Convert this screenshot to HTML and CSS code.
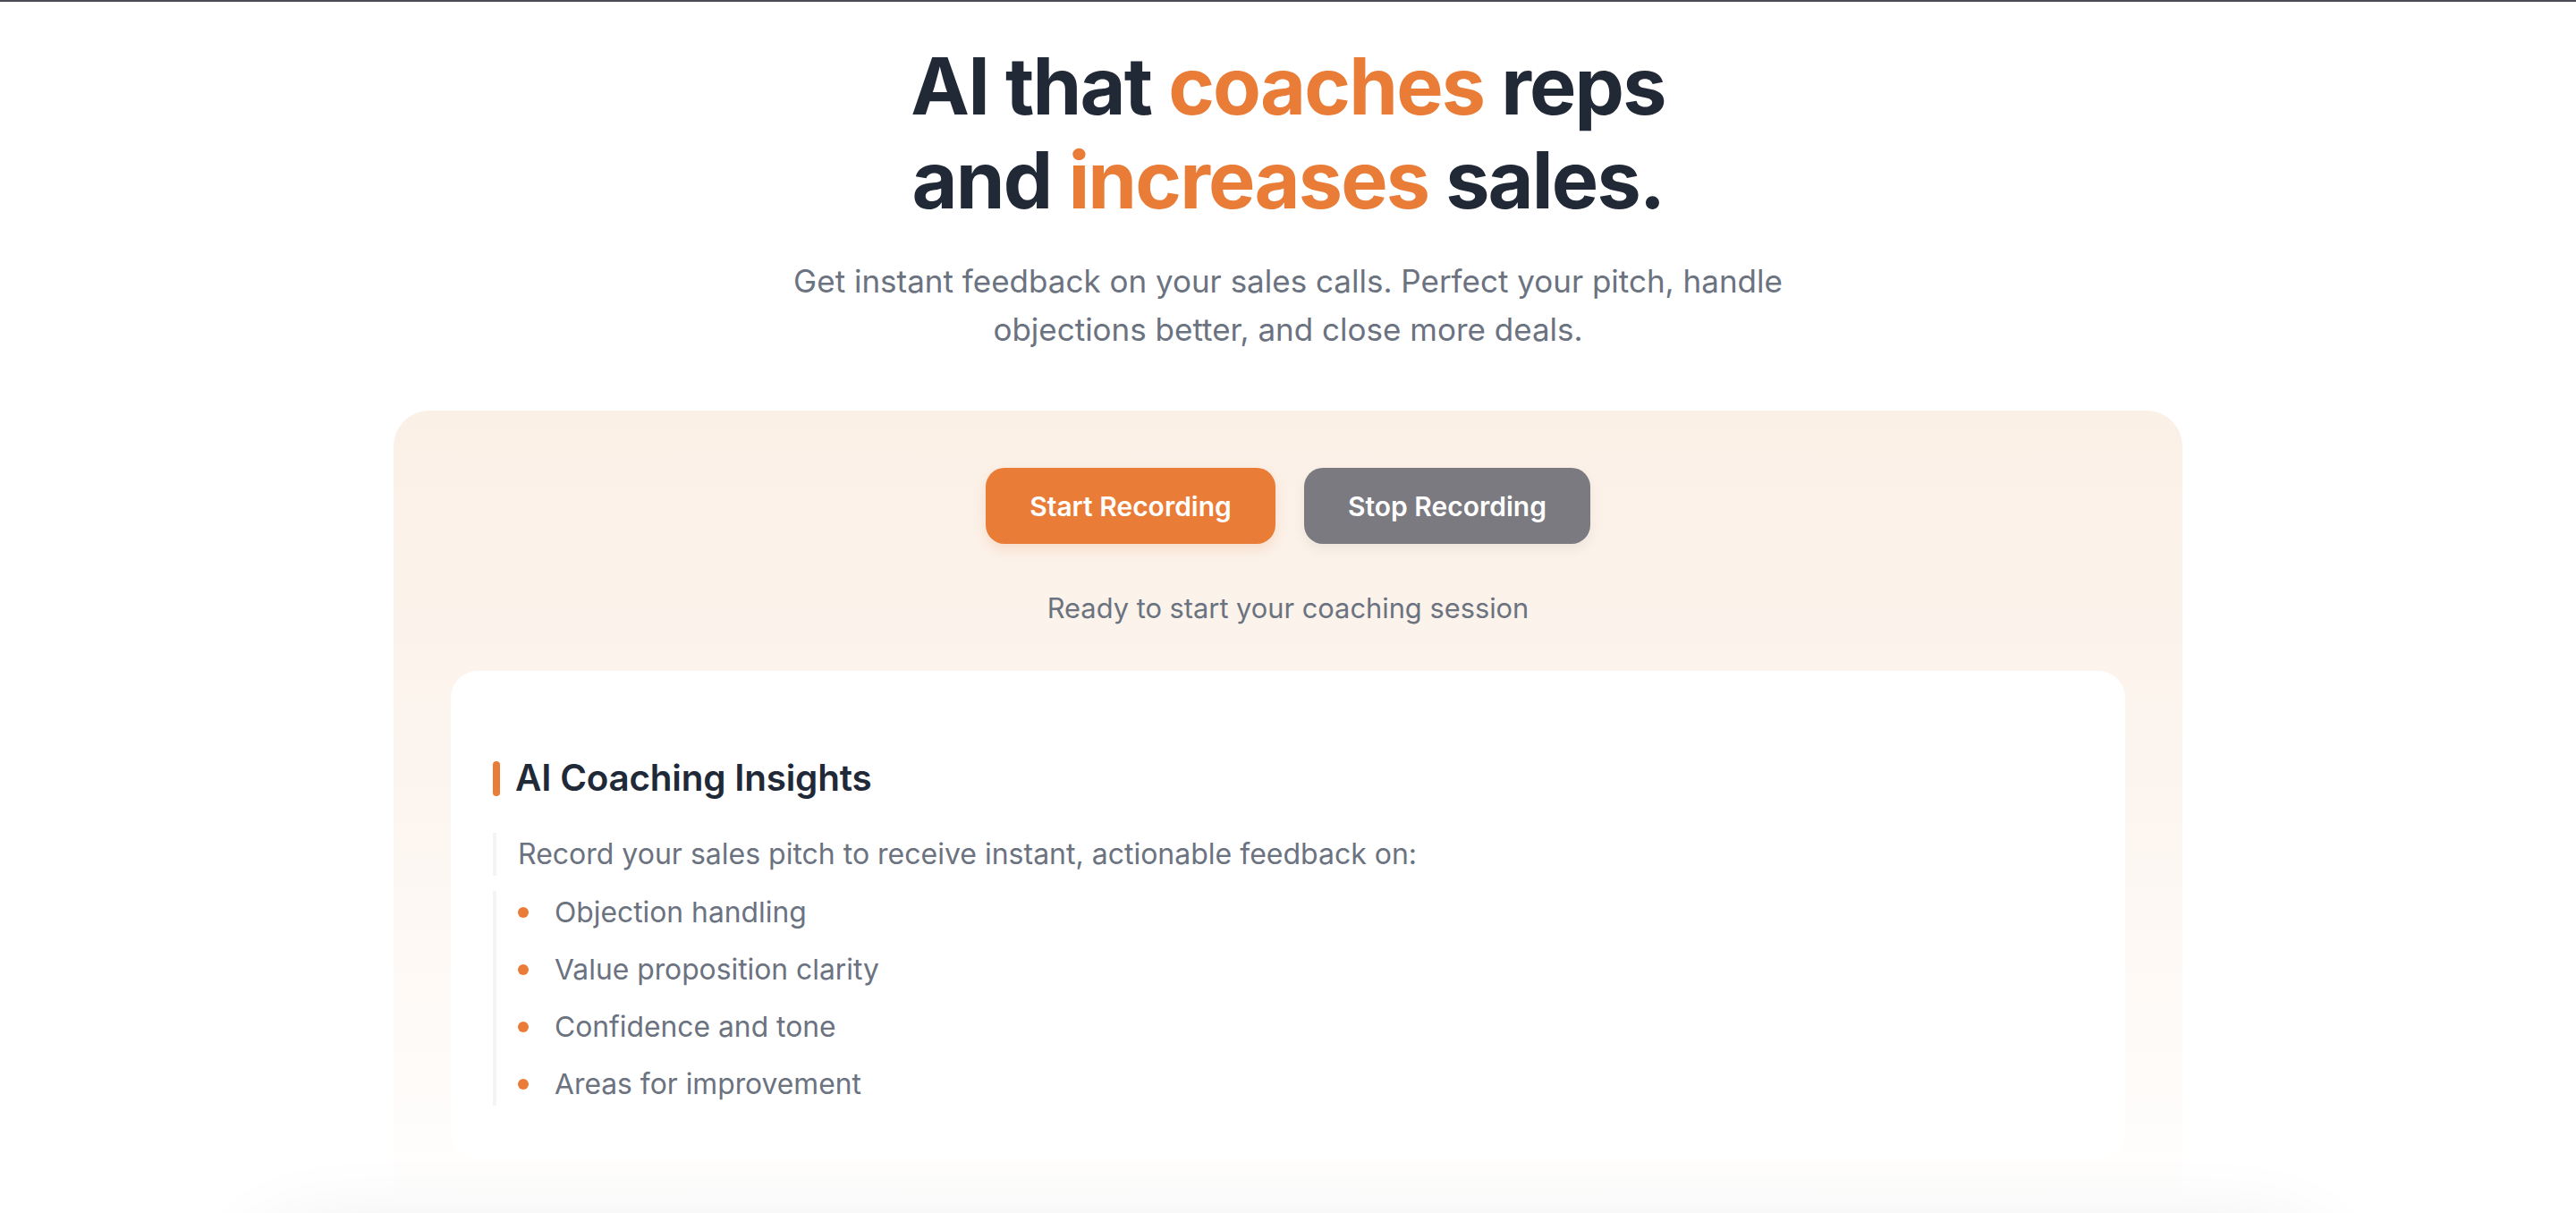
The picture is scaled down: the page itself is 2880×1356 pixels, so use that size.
FILE: index.html
```html
<!DOCTYPE html>
<html lang="en">
<head>
<meta charset="utf-8">
<title>AI Sales Coach</title>
<link rel="stylesheet" href="styles.css">
</head>
<body>
<div class="topline"></div>
<main class="page">
  <section class="hero">
    <h1 class="hero-title">AI that <span class="accent">coaches</span> reps<br>and <span class="accent">increases</span> sales.</h1>
    <p class="hero-sub">Get instant feedback on your sales calls. Perfect your pitch, handle<br>objections better, and close more deals.</p>
  </section>

  <section class="panel">
    <div class="controls">
      <button class="btn btn-start">Start Recording</button>
      <button class="btn btn-stop">Stop Recording</button>
    </div>
    <p class="status">Ready to start your coaching session</p>

    <div class="insights">
      <h2 class="insights-title">AI Coaching Insights</h2>
      <p class="insights-intro">Record your sales pitch to receive instant, actionable feedback on:</p>
      <ul class="insights-list">
        <li>Objection handling</li>
        <li>Value proposition clarity</li>
        <li>Confidence and tone</li>
        <li>Areas for improvement</li>
      </ul>
    </div>
  </section>

  <section class="preview"></section>
</main>
</body>
</html>
```

FILE: styles.css
```css
* { box-sizing: border-box; }

html, body {
  margin: 0;
  padding: 0;
  background: #ffffff;
}

body {
  font-family: Inter, "Noto Sans", "Liberation Sans", sans-serif;
  color: #1f2937;
}

.topline {
  height: 2px;
  background: #4b4b55;
}

.page {
  display: flex;
  flex-direction: column;
  align-items: center;
}

.hero {
  display: flex;
  flex-direction: column;
  align-items: center;
  text-align: center;
  padding-top: 42px;
}

.hero-title {
  margin: 0;
  font-size: 88px;
  line-height: 105px;
  font-weight: 700;
  letter-spacing: -1.85px;
  color: #212836;
}

.accent { color: #e97c37; }

.hero-sub {
  margin: 34px 0 0;
  font-size: 35px;
  line-height: 53.6px;
  color: #6b7280;
  font-weight: 400;
}

.panel {
  width: 2000px;
  margin-top: 64px;
  padding: 64px 64px 64px;
  border-radius: 40px;
  background: linear-gradient(180deg, #fbf0e6 0%, #fcf5ef 45%, #fefaf7 75%, #ffffff 100%);
  display: flex;
  flex-direction: column;
  align-items: center;
}

.controls {
  display: flex;
  gap: 32px;
}

.btn {
  height: 85px;
  border: none;
  border-radius: 21px;
  font-family: Inter, "Noto Sans", "Liberation Sans", sans-serif;
  font-size: 30px;
  font-weight: 600;
  color: #ffffff;
  padding: 0 40px;
  cursor: pointer;
}

.btn-start {
  width: 324px;
  background: #e97c37;
  box-shadow: 0 6px 14px rgba(233, 124, 55, 0.18);
}

.btn-stop {
  width: 320px;
  background: #7a7a80;
  box-shadow: 0 6px 14px rgba(0, 0, 0, 0.06);
}

.status {
  margin: 50px 0 0;
  font-size: 30.8px;
  line-height: 44px;
  color: #6b7280;
}

.insights {
  align-self: stretch;
  margin-top: 48px;
  background: #ffffff;
  border-radius: 30px;
  padding: 92px 46px 60px 47px;
}

.insights-title {
  margin: 0;
  display: flex;
  align-items: center;
  gap: 17px;
  font-size: 40.4px;
  line-height: 56px;
  font-weight: 600;
  color: #1f2937;
  letter-spacing: -0.2px;
}

.insights-title::before {
  content: "";
  width: 8px;
  height: 39px;
  border-radius: 4px;
  background: #e97c37;
}

.insights-intro {
  margin: 33px 0 0;
  padding-left: 24px;
  border-left: 4px solid #f3f4f6;
  font-size: 32px;
  line-height: 48px;
  color: #6b7280;
}

.insights-list {
  list-style: none;
  margin: 17px 0 0;
  padding: 0 0 0 24px;
  border-left: 4px solid #f3f4f6;
  display: flex;
  flex-direction: column;
  gap: 16px;
}

.insights-list li {
  display: flex;
  align-items: center;
  gap: 29px;
  font-size: 31.8px;
  line-height: 48px;
  color: #6b7280;
}

.insights-list li::before {
  content: "";
  width: 12px;
  height: 12px;
  border-radius: 50%;
  background: #e97c37;
  flex: none;
}

.preview {
  width: 2280px;
  height: 400px;
  margin-top: 40px;
  border-radius: 40px;
  background: #ffffff;
  box-shadow: 0 0 110px rgba(0, 0, 0, 0.14);
}
```
